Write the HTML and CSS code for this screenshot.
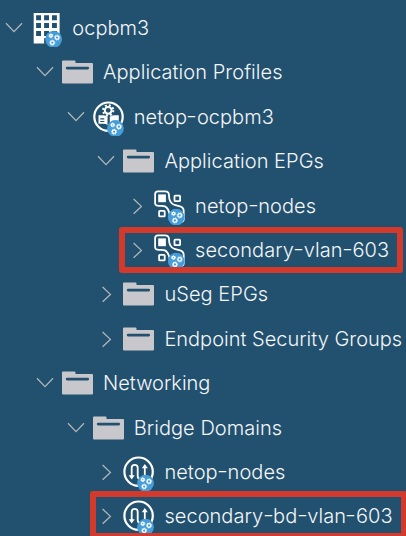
FILE: index.html
```
<!DOCTYPE html>
<html lang="en">
<head>
<meta charset="utf-8">
<title>Tenant tree</title>
<link rel="stylesheet" href="styles.css">
</head>
<body>
<svg class="defs" aria-hidden="true">
  <defs>
    <symbol id="down" viewBox="0 0 18 12"><path d="M1 1.3 9 9.6 17 1.3" fill="none" stroke="#b2b6b9" stroke-width="1.3"/></symbol>
    <symbol id="right" viewBox="0 0 12 18"><path d="M2.6 2 10.4 9.4 2.6 16.8" fill="none" stroke="#b2b6b9" stroke-width="1.3"/></symbol>
    <symbol id="badge" viewBox="0 0 17 17">
      <circle cx="8.5" cy="8.5" r="8.4" fill="#459dd9"/>
      <g fill="none" stroke="#fff">
        <g stroke-width="1.3"><circle cx="5.8" cy="5" r="1.3"/><circle cx="12" cy="6.8" r="1.8"/><circle cx="7.2" cy="11.9" r="1.8"/></g>
        <g stroke-width=".8" stroke-dasharray="1 1"><circle cx="12" cy="6.8" r="2.6"/><circle cx="7.2" cy="11.9" r="2.6"/><circle cx="5.8" cy="5" r="2"/></g>
      </g>
    </symbol>
    <symbol id="folder" viewBox="0 0 34 38">
      <path d="M0 8.6Q0 7.6 1 7.6H12.5Q13.5 7.6 13.5 8.6V10H30Q31 10 31 11V29.4Q31 30.4 30 30.4H1Q0 30.4 0 29.4Z" fill="#c7c7cc"/>
      <path d="M5.1 15.1H25.8" stroke="#22506f" stroke-width="2.6" stroke-linecap="round"/>
    </symbol>
    <symbol id="tenant" viewBox="0 0 34 38">
      <path d="M2.7 4H28.6V34.5H2.7Z" fill="#fff"/>
      <path d="M5.1 6.2h4.9v5H5.1zM13.1 6.2H18v5h-4.9zM21 6.2h4.9v5H21zM5.1 13.9h4.9v5H5.1zM13.1 13.9H18v5h-4.9zM21 13.9h4.9v5H21zM5.1 21.9h4.9v5H5.1zM13.1 21.9H18v5h-4.9zM21 21.9h4.9v5H21zM13.1 29.2H18v5.5h-4.9z" fill="#22506f"/>
      <use href="#badge" x="14.1" y="21.8" width="17" height="17"/>
    </symbol>
    <symbol id="profile" viewBox="0 0 34 38">
      <circle cx="15.5" cy="18.7" r="14.2" fill="none" stroke="#fff" stroke-width="2.2"/>
      <g stroke="#fff" fill="none"><circle cx="15.2" cy="12.3" r="3.4" stroke-width="2"/><circle cx="15.2" cy="12.3" r="5.1" stroke-width="2" stroke-dasharray="2 2.005"/></g>
      <path d="M5.5 17.3h4.7q3.2.2 4.3 1.4v8.2q-1.5-1.1-4.3-1.1H5.5zM25.8 17.3h-4.7q-3.2.2-4.3 1.4v8.2q1.5-1.1 4.3-1.1h4.7z" fill="#fff"/>
      <path d="M7.3 20.8h4M7.3 23.5h4" stroke="#22506f" stroke-width="1.2"/>
      <use href="#badge" x="13.9" y="21.9" width="17" height="17"/>
    </symbol>
    <symbol id="epg" viewBox="0 0 34 38">
      <path d="M4.2 7.4h7.7v7.8H4.2z" fill="#fff"/>
      <g fill="none" stroke="#fff" stroke-width="1.8">
        <rect x="20.5" y="8.6" width="5.6" height="5.6" rx=".7"/><rect x="5.1" y="23.8" width="5.6" height="5.6" rx=".7"/>
        <path d="M16 29C15 26 15.2 21.5 11 19.4 9 18.4 6.5 19.3 3.2 18.6Q1.1 18.2 1.1 16V7.2Q1.1 4.4 3.9 4.4H11Q15 4.4 15 8.4C15 13.7 16.7 16.3 20.5 18L26 19.3Q29.7 20.4 29.7 24V32.3Q29.7 34.8 27 34.8H20"/>
      </g>
      <use href="#badge" x="13.7" y="21.6" width="17" height="17"/>
    </symbol>
    <symbol id="bridge" viewBox="0 0 34 38">
      <circle cx="15.6" cy="18.7" r="14.2" fill="none" stroke="#fff" stroke-width="2.2"/>
      <g fill="none" stroke="#fff" stroke-width="1.8"><path d="M8.7 24V14.8Q8.7 11.9 11.7 11.9T14.7 14.8V23Q14.7 26 17.6 26T21.8 23V14"/></g>
      <path d="m5.7 22.2 3 4.4 3-4.4zM18.8 15.3l3-4.4 3 4.4z" fill="#fff"/>
      <use href="#badge" x="14" y="21.7" width="17" height="17"/>
    </symbol>
  </defs>
</svg>
<ul class="tree">
  <li class="row l0"><span class="toggle"><svg class="down"><use href="#down"/></svg></span><svg class="icon"><use href="#tenant"/></svg><span class="label">ocpbm3</span></li>
  <li class="row l1"><span class="toggle"><svg class="down"><use href="#down"/></svg></span><svg class="icon"><use href="#folder"/></svg><span class="label">Application Profiles</span></li>
  <li class="row l2"><span class="toggle"><svg class="down"><use href="#down"/></svg></span><svg class="icon"><use href="#profile"/></svg><span class="label">netop<i>-</i>ocpbm3</span></li>
  <li class="row l3"><span class="toggle"><svg class="down"><use href="#down"/></svg></span><svg class="icon"><use href="#folder"/></svg><span class="label">Application EPGs</span></li>
  <li class="row l4"><span class="toggle"><svg class="right"><use href="#right"/></svg></span><svg class="icon"><use href="#epg"/></svg><span class="label">netop<i>-</i>nodes</span></li>
  <li class="row l4 marked"><span class="toggle"><svg class="right"><use href="#right"/></svg></span><svg class="icon"><use href="#epg"/></svg><span class="label">secondary<i>-</i>vlan<i>-</i>603</span></li>
  <li class="row l3"><span class="toggle"><svg class="right"><use href="#right"/></svg></span><svg class="icon"><use href="#folder"/></svg><span class="label">uSeg EPGs</span></li>
  <li class="row l3"><span class="toggle"><svg class="right"><use href="#right"/></svg></span><svg class="icon"><use href="#folder"/></svg><span class="label long">Endpoint Security Groups</span></li>
  <li class="row l1"><span class="toggle"><svg class="down"><use href="#down"/></svg></span><svg class="icon"><use href="#folder"/></svg><span class="label long">Networking</span></li>
  <li class="row l2"><span class="toggle"><svg class="down"><use href="#down"/></svg></span><svg class="icon"><use href="#folder"/></svg><span class="label">Bridge Domains</span></li>
  <li class="row l3"><span class="toggle"><svg class="right"><use href="#right"/></svg></span><svg class="icon"><use href="#bridge"/></svg><span class="label">netop<i>-</i>nodes</span></li>
  <li class="row l3 marked wide"><span class="toggle"><svg class="right"><use href="#right"/></svg></span><svg class="icon"><use href="#bridge"/></svg><span class="label">secondary<i>-</i>bd<i>-</i>vlan<i>-</i>603</span></li>
</ul>
</body>
</html>
```
FILE: styles.css
```
* { box-sizing: border-box; }
html, body { margin: 0; height: 536px; overflow: hidden; background: #22506f; }
.defs { position: absolute; width: 0; height: 0; }
.tree { list-style: none; margin: 0; padding: 5.8px 0 0; }
.row { position: relative; display: flex; align-items: center; height: 44.4px; color: #f4f6f8; font: 300 20px/26px Inter, "Liberation Sans", sans-serif; white-space: nowrap; }
.l0 { padding-left: 5.3px; }
.l1 { padding-left: 36px; }
.l2 { padding-left: 66.7px; }
.l3 { padding-left: 97.4px; }
.l4 { padding-left: 128.1px; }
.toggle { display: flex; justify-content: center; width: 18px; margin-right: 8px; flex: none; }
.down { width: 18px; height: 12px; }
.right { width: 12px; height: 18px; }
.icon { width: 34px; height: 38px; flex: none; margin-right: 7px; }
.label { letter-spacing: .05px; }
.long { letter-spacing: 0; }
.label i { display: inline-block; font-style: normal; margin: 0 .4px; transform: translateY(-1px) scaleX(1.2); }
.marked::after { content: ""; box-sizing: border-box; position: absolute; left: 119px; top: -.8px; width: 284px; height: 46px; border: 6px solid #d33a2b; border-radius: 3px; }
.wide::after { left: 90px; top: -3.2px; width: 317px; height: 48px; }
```
